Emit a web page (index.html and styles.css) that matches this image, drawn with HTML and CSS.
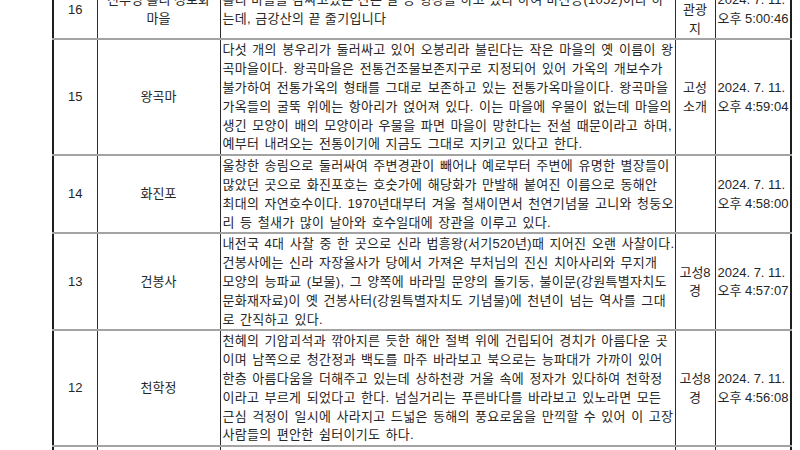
FILE: index.html
```html
<!DOCTYPE html>
<html lang="ko">
<head>
<meta charset="utf-8">
<title>고성 관광지 목록</title>
<link rel="stylesheet" href="styles.css">
</head>
<body>
<div class="viewport">
  <table class="sheet">
    <colgroup>
      <col class="c-no">
      <col class="c-name">
      <col class="c-desc">
      <col class="c-cat">
      <col class="c-date">
    </colgroup>
    <tbody>
      <tr>
        <td class="no">16</td>
        <td class="name">진부령 흘리 정보화 마을</td>
        <td class="desc tight">흘리 마을을 감싸고있는 산은 말 등 형상을 하고 있다 하여 마산봉(1052)이라 하<br>는데, 금강산의 끝 줄기입니다</td>
        <td class="cat">고성관광지</td>
        <td class="date">2024. 7. 11.<br>오후 5:00:46</td>
      </tr>
      <tr>
        <td class="no">15</td>
        <td class="name">왕곡마</td>
        <td class="desc">다섯 개의 봉우리가 둘러싸고 있어 오봉리라 불린다는 작은 마을의 옛 이름이 왕<br>곡마을이다. 왕곡마을은 전통건조물보존지구로 지정되어 있어 가옥의 개보수가<br>불가하여 전통가옥의 형태를 그대로 보존하고 있는 전통가옥마을이다. 왕곡마을<br>가옥들의 굴뚝 위에는 항아리가 얹어져 있다. 이는 마을에 우물이 없는데 마을의<br>생긴 모양이 배의 모양이라 우물을 파면 마을이 망한다는 전설 때문이라고 하며,<br>예부터 내려오는 전통이기에 지금도 그대로 지키고 있다고 한다.</td>
        <td class="cat">고성소개</td>
        <td class="date">2024. 7. 11.<br>오후 4:59:04</td>
      </tr>
      <tr>
        <td class="no">14</td>
        <td class="name">화진포</td>
        <td class="desc">울창한 송림으로 둘러싸여 주변경관이 빼어나 예로부터 주변에 유명한 별장들이<br>많았던 곳으로 화진포호는 호숫가에 해당화가 만발해 붙여진 이름으로 동해안<br>최대의 자연호수이다. 1970년대부터 겨울 철새이면서 천연기념물 고니와 청둥오<br>리 등 철새가 많이 날아와 호수일대에 장관을 이루고 있다.</td>
        <td class="cat"></td>
        <td class="date">2024. 7. 11.<br>오후 4:58:00</td>
      </tr>
      <tr>
        <td class="no">13</td>
        <td class="name">건봉사</td>
        <td class="desc">내전국 4대 사찰 중 한 곳으로 신라 법흥왕(서기520년)때 지어진 오랜 사찰이다.<br>건봉사에는 신라 자장율사가 당에서 가져온 부처님의 진신 치아사리와 무지개<br>모양의 능파교 (보물), 그 양쪽에 바라밀 문양의 돌기둥, 불이문(강원특별자치도<br>문화재자료)이 옛 건봉사터(강원특별자치도 기념물)에 천년이 넘는 역사를 그대<br>로 간직하고 있다.</td>
        <td class="cat">고성8경</td>
        <td class="date">2024. 7. 11.<br>오후 4:57:07</td>
      </tr>
      <tr>
        <td class="no">12</td>
        <td class="name">천학정</td>
        <td class="desc">천혜의 기암괴석과 깎아지른 듯한 해안 절벽 위에 건립되어 경치가 아름다운 곳<br>이며 남쪽으로 청간정과 백도를 마주 바라보고 북으로는 능파대가 가까이 있어<br>한층 아름다움을 더해주고 있는데 상하천광 거울 속에 정자가 있다하여 천학정<br>이라고 부르게 되었다고 한다. 넘실거리는 푸른바다를 바라보고 있노라면 모든<br>근심 걱정이 일시에 사라지고 드넓은 동해의 풍요로움을 만끽할 수 있어 이 고장<br>사람들의 편안한 쉼터이기도 하다.</td>
        <td class="cat">고성8경</td>
        <td class="date">2024. 7. 11.<br>오후 4:56:08</td>
      </tr>
      <tr class="tail">
        <td class="no"></td>
        <td class="name"></td>
        <td class="desc"></td>
        <td class="cat"></td>
        <td class="date"></td>
      </tr>
    </tbody>
  </table>
</div>
</body>
</html>
```

FILE: styles.css
```css
html, body {
  margin: 0;
  padding: 0;
  background: #ffffff;
}

.viewport {
  width: 800px;
  height: 450px;
  overflow: hidden;
  padding-left: 52px;
  box-sizing: border-box;
}

.sheet {
  margin-top: -21px;
  border-collapse: collapse;
  table-layout: fixed;
  width: 738px;
  font-family: "Liberation Sans", "Noto Sans CJK KR", sans-serif;
  font-size: 13px;
  line-height: 18.8px;
  color: #262626;
  border-left: 2px solid #1e1e1e;
  border-right: 2px solid #1e1e1e;
}

.c-no { width: 44px; }
.c-name { width: 123px; }
.c-desc { width: 455px; }
.c-cat { width: 40px; }
.c-date { width: 76px; }

.sheet td {
  padding: 1px 2px 0 2px;
  vertical-align: middle;
  border-left: 1px solid #2b2b2b;
  border-right: 1px solid #2b2b2b;
  border-top: 2px solid #a3a3a3;
  border-bottom: 2px solid #a3a3a3;
  overflow: hidden;
}

.no, .name, .cat {
  text-align: center;
}

.desc {
  text-align: left;
  white-space: nowrap;
  letter-spacing: 0.3px;
  word-spacing: 1.4px;
  padding-right: 0;
}

.desc.tight {
  word-spacing: 0.3px;
}

.date {
  text-align: left;
  white-space: nowrap;
  padding-left: 1px;
  padding-right: 0;
}

.tail td {
  height: 80px;
}
```
